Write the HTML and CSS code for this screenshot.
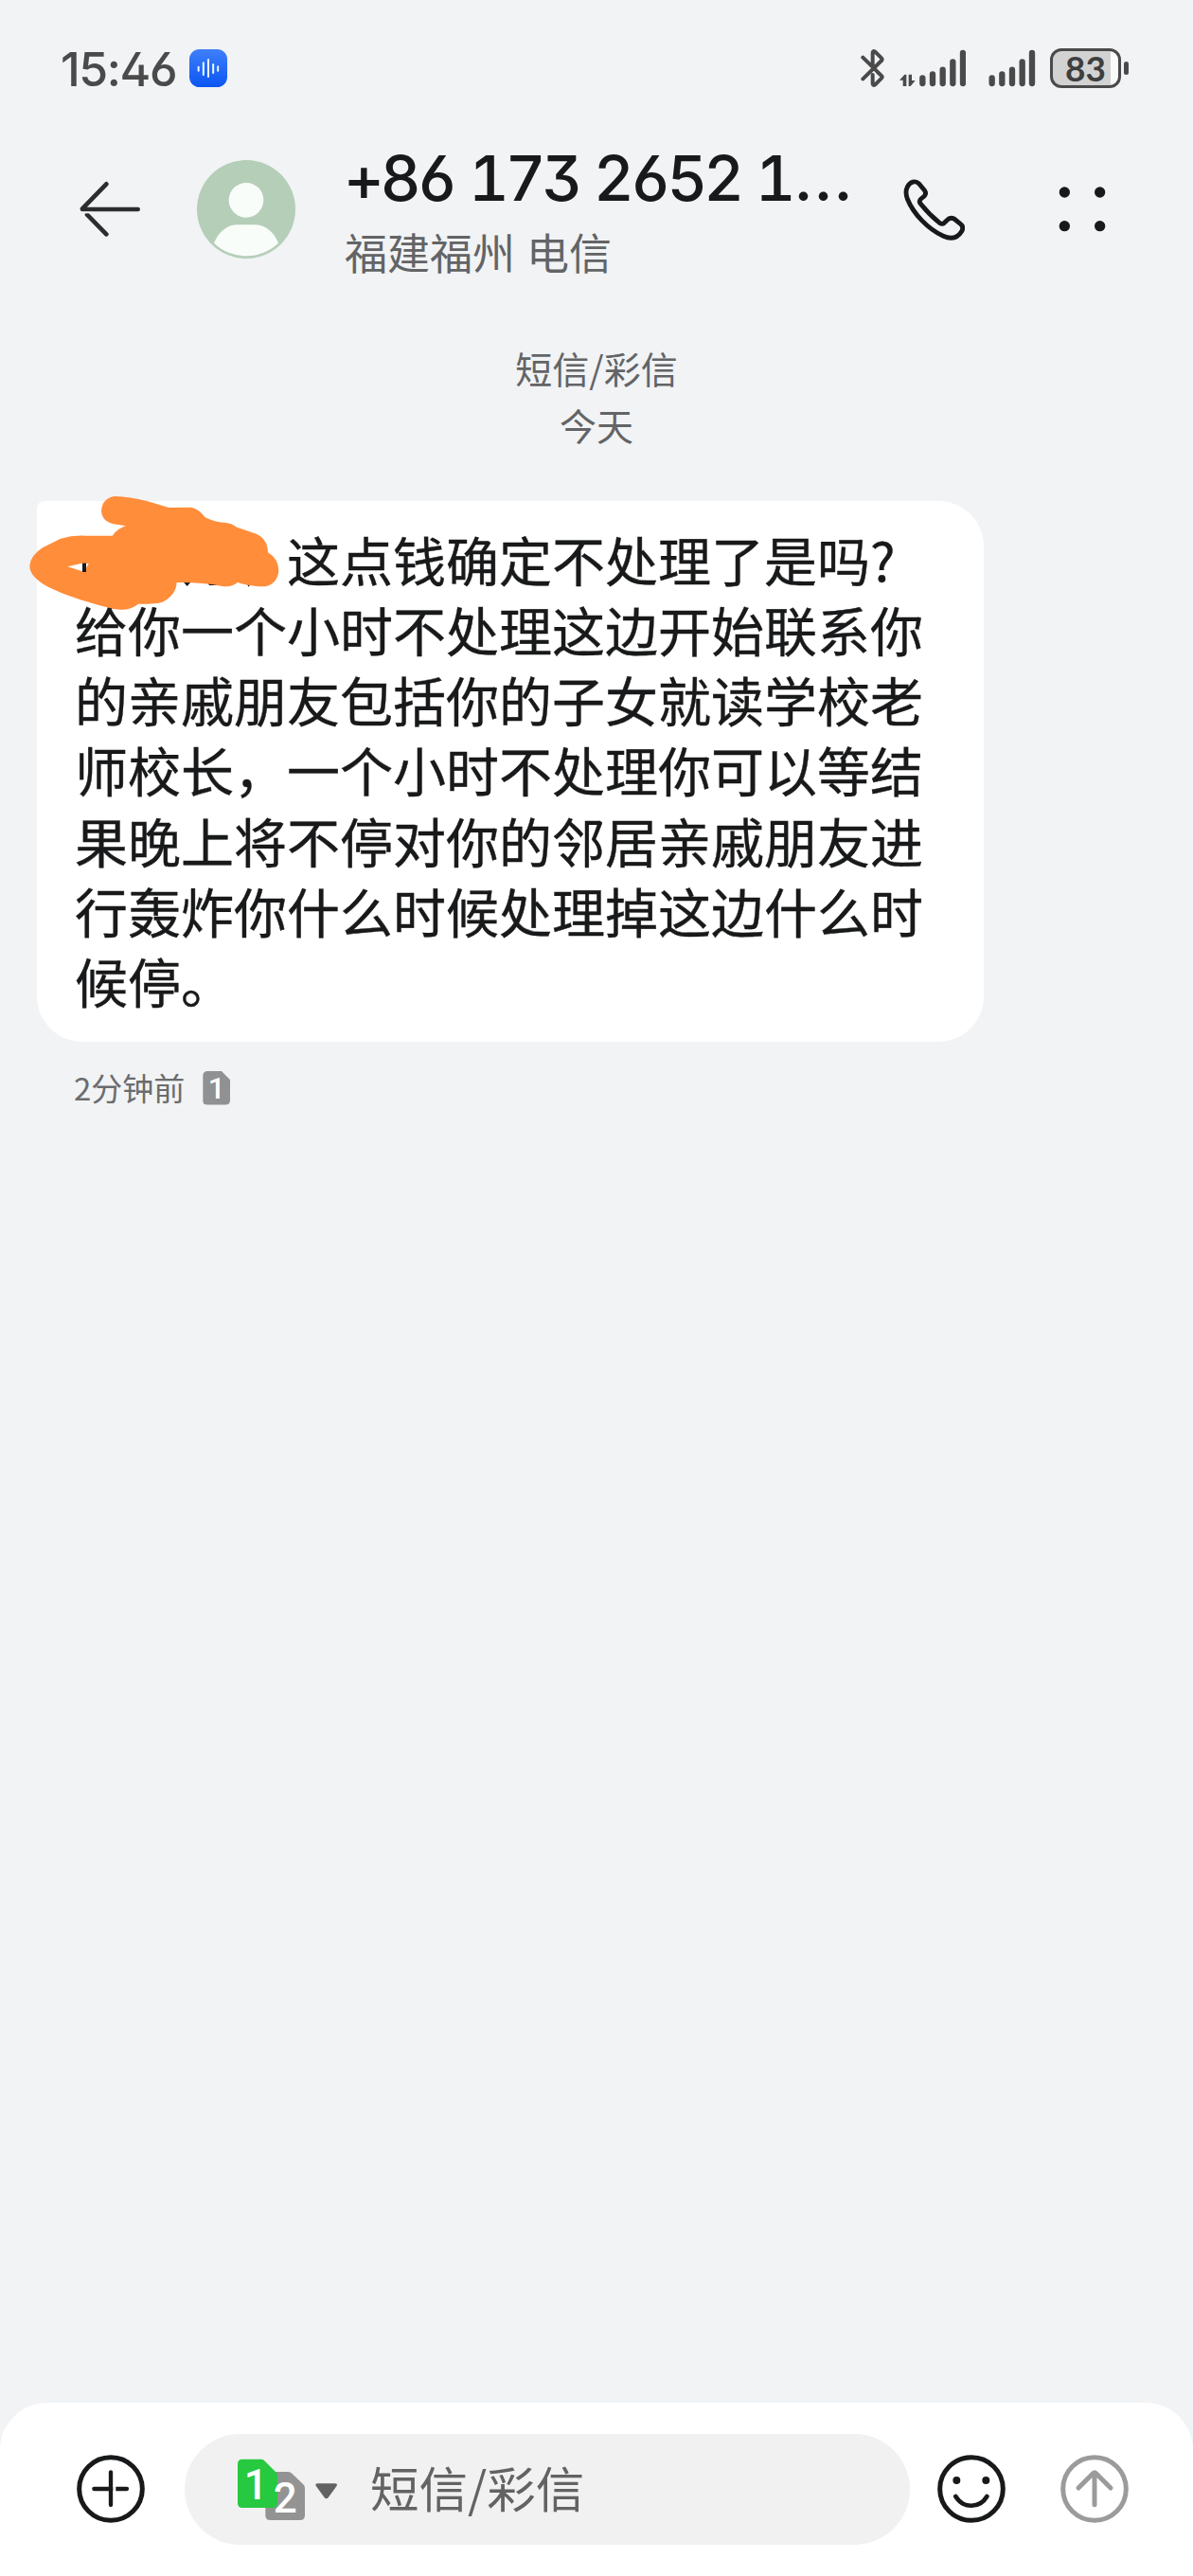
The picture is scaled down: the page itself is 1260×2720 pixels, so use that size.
FILE: index.html
```
<!DOCTYPE html>
<html lang="zh-CN">
<head>
  <meta charset="UTF-8" />
  <meta name="viewport" content="width=device-width, initial-scale=1.0"/>
  <title>短信/彩信</title>
  <link rel="stylesheet" href="styles.css">
</head>
<body>
  <div class="status-bar">
    <span class="time">15:46</span>
    <svg class="app-icon" width="40" height="40" viewBox="0 0 120 120">
      <defs>
        <linearGradient id="blue" x1="0" y1="0" x2="0" y2="1">
          <stop offset="0" stop-color="#3f7ffa"/>
          <stop offset="1" stop-color="#0b55f3"/>
        </linearGradient>
      </defs>
      <rect width="120" height="120" rx="32" fill="url(#blue)"/>
      <path d="M29 56v12M44.500 43v38M60 33v54M75.500 48v27M90.500 55v13" stroke="#e8fbff" stroke-width="6" stroke-linecap="round"/>
    </svg>
    <div class="status-icons">
      <svg class="bluetooth" width="26" height="42" viewBox="0 0 78 126">
        <path d="M7 29L65 86M7 97L66 39q4-4 0-8L46 11Q38 6 38 15v46M38 84v27q0 9 8 4L66 95q4-4 0-8L54 76" fill="none" stroke="#4a4a4a" stroke-width="12" stroke-linecap="round" stroke-linejoin="round"/>
      </svg>
      <svg class="signal-data" width="70" height="40" viewBox="0 0 210 120">
        <path d="M0 98L16 80H22V117H11V98ZM29 80h10v19h11L35 117H29Z" fill="#4a4a4a"/>
        <path d="M73 91v17M105 79v29M137 65v43M169 40v68M201 12v96" stroke="#4a4a4a" stroke-width="19" stroke-linecap="round"/>
      </svg>
      <svg class="signal" width="50" height="40" viewBox="0 0 150 120">
        <path d="M11 91v17M43 79v29M75 65v43M107 40v68M138 12v96" stroke="#4a4a4a" stroke-width="19" stroke-linecap="round"/>
      </svg>
      <div class="battery"><span>83</span></div>
    </div>
  </div>

  <header class="header">
    <svg class="back" width="66" height="62" viewBox="0 0 198 186">
      <path d="M9 93H185M9 91L85 13M24 110L85 172" fill="none" stroke="#2d2d2e" stroke-width="14" stroke-linecap="round"/>
      <path d="M0 101h40v5H0z" fill="#f1f3f5"/>
    </svg>
    <svg class="avatar" width="104" height="104" viewBox="0 0 312 312">
      <circle cx="156" cy="156" r="156" fill="#b5ceb8"/>
      <circle cx="156" cy="127" r="55" fill="#f9fdf9"/>
      <path d="M54 263C68 229 94 205 130 205H182C218 205 244 229 258 263A148 148 0 0 1 54 263Z" fill="#f9fdf9"/>
    </svg>
    <div class="contact">
      <h1>+86 173 2652 1<span class="dots">...</span></h1>
      <p>福建福州 电信</p>
    </div>
    <svg class="phone" width="66" height="66" viewBox="0 0 198 198">
      <path d="M16 28C25 10 42 7 53 18L71 40Q77 49 70 57L59 66Q51 73 58 82Q86 117 119 143Q127 147 133 142L141 134Q151 123 164 129L184 145Q196 155 188 169C174 192 155 195 130 184C80 161 35 113 16 66Q8 44 16 28Z" fill="none" stroke="#18191a" stroke-width="14.500" stroke-linejoin="round"/>
    </svg>
    <svg class="more" width="50" height="48" viewBox="0 0 150 144">
      <g fill="#18191a">
        <circle cx="19" cy="18" r="17"/>
        <circle cx="131" cy="18" r="17"/>
        <circle cx="19" cy="125" r="17"/>
        <circle cx="131" cy="125" r="17"/>
      </g>
    </svg>
  </header>

  <main class="thread">
    <div class="thread-info">
      <p>短信/彩信</p>
      <p>今天</p>
    </div>

    <div class="bubble">
      <p>这点钱确定不处理了是吗?<br>给你一个小时不处理这边开始联系你的亲戚朋友包括你的子女就读学校老师校长，一个小时不处理你可以等结果晚上将不停对你的邻居亲戚朋友进行轰炸你什么时候处理掉这边什么时候停。</p>
      <svg class="scribble" width="400" height="150" viewBox="0 0 1200 450">
        <path d="M520 342h26l-13 15zM597 345h32v9h-26zM720 345h16l-8 14z" fill="#18191a"/>
        <path d="M305 72Q350 74 405 87L475 108L545 107Q570 111 590 139Q625 156 655 156Q672 157 690 170L745 189Q788 203 789 250Q823 270 823 310Q818 350 780 358Q735 358 693 345Q672 362 640 356Q580 344 500 345Q498 385 455 407Q430 414 378 413Q350 438 300 429C240 415 150 389 90 358Q33 326 34 292Q37 259 75 235L132 206Q170 195 210 197H296Q313 174 338 166L300 160Q263 152 261 118Q264 77 305 72Z" fill="#ff8d3a"/>
        <path d="M154 295L200 284L221 286L214 297L212 312L201 310Z" fill="#fff"/>
        <path d="M201 284h12v28h-12z" fill="#18191a"/>
      </svg>
    </div>

    <div class="meta">
      <span>2分钟前</span>
      <span class="sim">1</span>
    </div>
  </main>

  <footer class="composer">
    <svg class="round-icon" width="72" height="72" viewBox="0 0 216 216">
      <g fill="none" stroke="#18191a" stroke-linecap="round">
        <circle cx="108" cy="108" r="100" stroke-width="15"/>
        <path d="M108 55v104M55 108h104" stroke-width="13"/>
      </g>
      <path d="M115 98h9v20h-9z" fill="#fff"/>
    </svg>
    <div class="input">
      <svg class="sims" width="106" height="66" viewBox="0 0 318 198">
        <path d="M103 42H160Q167 42 172 47L208 82Q213 87 213 94V180Q213 195 198 195H103Q88 195 88 180V57Q88 42 103 42Z" fill="#939393"/>
        <path d="M15 2H74Q80 2 84 6L120 42Q126 48 126 56V141Q126 156 111 156H15Q0 156 0 141V17Q0 2 15 2Z" fill="#27c940"/>
        <text x="58" y="128" class="sim-digit">1</text>
        <text x="151" y="170" class="sim-digit">2</text>
        <path d="M254 79H308Q319 80 313 88L288 122Q281 132 274 122L249 88Q243 80 254 79Z" fill="#626262"/>
      </svg>
      <span class="placeholder">短信/彩信</span>
    </div>
    <svg class="round-icon smile" width="72" height="72" viewBox="0 0 216 216">
      <g fill="none" stroke="#18191a" stroke-linecap="round">
        <circle cx="108" cy="108" r="100" stroke-width="15"/>
        <path d="M58 132C82 171 134 171 157 132" stroke-width="14"/>
      </g>
      <circle cx="61" cy="81" r="12" fill="#18191a"/>
      <circle cx="154" cy="81" r="12" fill="#18191a"/>
    </svg>
    <svg class="round-icon send" width="72" height="72" viewBox="0 0 216 216">
      <g fill="none" stroke="#9b9b9b" stroke-linecap="round" stroke-linejoin="round">
        <circle cx="108" cy="108" r="100" stroke-width="15"/>
        <path d="M108 60v98M57 105L103 59q5-5 10 0L159 105" stroke-width="15"/>
      </g>
    </svg>
  </footer>
</body>
</html>
```
FILE: styles.css
```
* {
  box-sizing: border-box;
  margin: 0;
  padding: 0;
}

body {
  background-color: #f1f3f5;
  color: #18191a;
  font-family: 'Noto Sans CJK SC', sans-serif;
  display: flex;
  flex-direction: column;
  height: 2720px;
}

svg {
  display: block;
  flex-shrink: 0;
}

/* status bar */
.status-bar {
  display: flex;
  align-items: center;
  height: 144px;
  padding: 0 68px 0 64px;
}

.time {
  width: 136px;
  padding-top: 2px;
  font-family: Inter, sans-serif;
  font-feature-settings: "ss01", "cv03";
  font-size: 50px;
  font-weight: 500;
  letter-spacing: -1.4px;
  color: #4a4a4a;
}

.status-icons {
  display: flex;
  align-items: center;
  margin-left: auto;
}

.signal-data {
  margin-left: 15px;
}

.signal {
  margin-left: 24px;
}

.battery {
  position: relative;
  width: 75px;
  height: 42px;
  margin-left: 15px;
  margin-right: 8px;
  border: 3px solid #4a4a4a;
  border-radius: 12px;
  background: linear-gradient(to right, #d2d2d3 61px, #fafafa 61px);
  text-align: center;
  font-family: Lato, sans-serif;
  font-size: 37px;
  font-weight: bold;
  line-height: 36px;
  color: #3e3e3f;
}

.battery::after {
  content: "";
  position: absolute;
  right: -11px;
  top: 11px;
  width: 5px;
  height: 14px;
  border-radius: 3px;
  background-color: #4a4a4a;
}

/* header */
.header {
  display: flex;
  align-items: center;
  height: 154px;
  padding-left: 84px;
}

.avatar {
  margin-left: 58px;
}

.contact {
  align-self: flex-start;
  width: 589px;
  margin-left: 51px;
  margin-right: 1px;
  white-space: nowrap;
}

.contact h1 {
  height: 88px;
  font-family: Inter, sans-serif;
  font-feature-settings: "ss01", "cv03", "tnum";
  font-size: 66px;
  font-weight: 500;
  line-height: 88px;
  letter-spacing: -4px;
  word-spacing: 2px;
}

.contact .dots {
  margin-left: 2px;
  font-feature-settings: normal;
  letter-spacing: 1px;
}

.contact p {
  padding-left: 1px;
  font-size: 45px;
  line-height: 68px;
  word-spacing: 2px;
  color: #636466;
}

.more {
  margin-left: 99px;
}

/* messages */
.thread {
  flex: 1;
  padding-left: 39px;
}

.thread-info {
  height: 231px;
  margin-left: -39px;
  padding-top: 60px;
  text-align: center;
  font-size: 39px;
  line-height: 60px;
  color: #636466;
}

.bubble {
  position: relative;
  width: 1000px;
  height: 571px;
  padding: 24px 60px 0 40px;
  border-radius: 8px 48px 48px 48px;
  background-color: #fff;
}

.bubble p {
  width: 900px;
  font-size: 56px;
  line-height: 74.15px;
  text-indent: 4em;
  -webkit-text-stroke: 0.4px #18191a;
}

/* covers the name at the start of the message */
.scribble {
  position: absolute;
  left: -19px;
  top: -29px;
}

.meta {
  display: flex;
  align-items: center;
  height: 97px;
  padding-left: 39px;
  font-size: 33px;
  color: #6b6c6e;
}

.meta span:first-child {
  margin-top: -2px;
}

.sim {
  width: 29px;
  height: 36px;
  margin-left: 19px;
  border-radius: 5px;
  clip-path: polygon(0 0, 66% 0, 100% 28%, 100% 100%, 0 100%);
  background-color: #909193;
  color: #fff;
  font-family: Roboto, sans-serif;
  font-size: 32px;
  font-weight: 500;
  line-height: 37px;
  text-align: center;
}

/* composer */
.composer {
  display: flex;
  align-items: flex-start;
  height: 183px;
  padding: 33px 68px 0 81px;
  border-radius: 50px 50px 0 0;
  background-color: #fff;
}

.round-icon {
  margin-top: 22px;
}

.input {
  display: flex;
  align-items: center;
  width: 766px;
  height: 117px;
  margin-left: 42px;
  padding-left: 56px;
  border-radius: 59px;
  background-color: #f1f1f1;
}

.sims {
  overflow: visible;
}

.sim-digit {
  fill: #fff;
  font-family: Roboto, sans-serif;
  font-size: 132px;
  font-weight: 500;
  text-anchor: middle;
}

.placeholder {
  margin-left: 34px;
  margin-top: -6px;
  font-size: 51.500px;
  color: #636363;
}

.smile {
  margin-left: 29px;
}

.send {
  margin-left: 58px;
}
```
